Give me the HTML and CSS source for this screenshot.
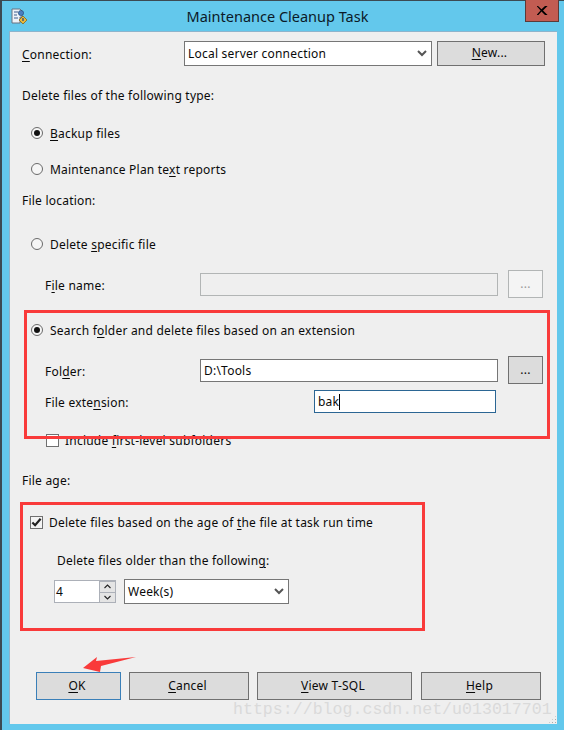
FILE: index.html
```html
<!DOCTYPE html>
<html lang="en">
<head>
<meta charset="utf-8">
<title>Maintenance Cleanup Task</title>
<link rel="stylesheet" href="styles.css">
</head>
<body>
<div class="window">
  <header class="titlebar">
    <svg class="app-icon" width="17" height="17" viewBox="0 0 17 17">
      <path d="M1 1h8l2 2v6H9v6H1z" fill="#eef2f7" stroke="#6b7280" stroke-width="1"/>
      <path d="M3 4h4M3 7h3M3 10h4" stroke="#3f5f8f" stroke-width="1"/>
      <circle cx="10" cy="5" r="2.6" fill="#4a7fc0" stroke="#1f3f70" stroke-width=".6"/>
      <path d="M12 8l4 4-4 4-4-4z" fill="#e8b93c" stroke="#7a5a10" stroke-width=".7"/>
      <path d="M12 10v3" stroke="#33507a" stroke-width="1.4"/>
    </svg>
    <h1 class="title">Maintenance Cleanup Task</h1>
    <div class="close"><svg width="11" height="9" viewBox="0 0 11 9"><path d="M1 0l3.500 3.300L8 0h2.600L6 4.400 10.600 9H8L4.500 5.500 1.400 9H-.4l4-4.600L-.4 0z" fill="#000"/></svg></div>
  </header>

  <main class="client">
    <div class="row row-connection">
      <span class="label"><u>C</u>onnection:</span>
      <div class="field combo"><span>Local server connection</span><svg class="chev" width="10" height="7" viewBox="0 0 10 7"><path d="M1 1l4 4 4-4" fill="none" stroke="#555" stroke-width="2"/></svg></div>
      <div class="btn btn-new"><span><u>N</u>ew...</span></div>
    </div>

    <div class="line line-type">Delete files of the following type:</div>
    <div class="choice line-backup"><span class="radio on"></span><span><u>B</u>ackup files</span></div>
    <div class="choice line-maint"><span class="radio"></span><span>Maintenance Plan te<u>x</u>t reports</span></div>
    <div class="line line-location">File location:</div>
    <div class="choice line-specific"><span class="radio"></span><span>Delete <u>s</u>pecific file</span></div>

    <div class="row file-row line-name">
      <span class="label">F<u>i</u>le name:</span>
      <div class="field disabled"></div>
      <div class="btn btn-dots disabled"><span>...</span></div>
    </div>

    <div class="choice line-search"><span class="radio on"></span><span>Search f<u>o</u>lder and delete files based on an extension</span></div>

    <div class="row file-row line-folder">
      <span class="label">Fol<u>d</u>er:</span>
      <div class="field"><span>D:\Tools</span></div>
      <div class="btn btn-dots"><span>...</span></div>
    </div>

    <div class="row ext-row">
      <span class="label">File exte<u>n</u>sion:</span>
      <div class="field focus"><span class="caret">bak</span></div>
    </div>

    <div class="check-line line-include"><span class="check"></span><span>Include <u>f</u>irst-level subfolders</span></div>
    <div class="line line-age">File age:</div>
    <div class="check-line line-based"><span class="check on"><svg width="12" height="11" viewBox="0 0 12 11"><path d="M1.500 5.500l3 3 6-7" fill="none" stroke="#222" stroke-width="2.400"/></svg></span><span>Delete files based on the age of <u>t</u>he file at task run time</span></div>
    <div class="line line-older">Delete files older than the followin<u>g</u>:</div>

    <div class="row age-row">
      <div class="spin">
        <span class="spin-val">4</span>
        <div class="spin-btns">
          <div class="spin-btn"><svg width="7" height="5" viewBox="0 0 7 5"><path d="M.5 4l3-3 3 3" fill="none" stroke="#222" stroke-width="1.100"/></svg></div>
          <div class="spin-btn"><svg width="7" height="5" viewBox="0 0 7 5"><path d="M.5 1l3 3 3-3" fill="none" stroke="#222" stroke-width="1.100"/></svg></div>
        </div>
      </div>
      <div class="field combo combo-age"><span>Week(s)</span><svg class="chev" width="10" height="7" viewBox="0 0 10 7"><path d="M1 1l4 4 4-4" fill="none" stroke="#555" stroke-width="2"/></svg></div>
    </div>

    <div class="row actions">
      <div class="btn btn-ok"><span><u>O</u>K</span></div>
      <div class="btn btn-cancel"><span><u>C</u>ancel</span></div>
      <div class="btn btn-view"><span><u>V</u>iew T-SQL</span></div>
      <div class="btn btn-help"><span><u>H</u>elp</span></div>
    </div>
  </main>

  <div class="mark mark-search"></div>
  <div class="mark mark-age"></div>
  <svg class="arrow" width="56" height="19" viewBox="0 0 56 19"><path d="M1 12L15 1l-1 4L54 1 19 10l-1 6z" fill="#f93a3a"/></svg>
  <div class="watermark">https://blog.csdn.net/u013017701</div>
  <div class="grip"></div>
</div>
</body>
</html>
```

FILE: styles.css
```css
* { box-sizing: border-box; }

html, body {
  margin: 0;
  padding: 0;
}

body {
  width: 564px;
  height: 730px;
  overflow: hidden;
  font-family: "Noto Sans", "Open Sans", sans-serif;
  font-size: 12px;
  letter-spacing: 0.22px;
  color: #0a0a0a;
}

u {
  text-underline-offset: 2px;
  text-decoration-thickness: 1px;
}

.window {
  position: relative;
  width: 564px;
  height: 730px;
  display: flex;
  flex-direction: column;
  background: #63c8ec;
  border-top: 1px solid #3c4a52;
  border-left: 2px solid #3c4a52;
  padding-left: 7px;
  padding-right: 7px;
}

.titlebar {
  flex: none;
  height: 30px;
  display: flex;
  align-items: center;
  position: relative;
}

.app-icon {
  position: absolute;
  left: 2px;
  top: 7px;
}

.title {
  margin: 0;
  width: 100%;
  padding-right: 11px;
  text-align: center;
  font-size: 14.500px;
  font-weight: 400;
  letter-spacing: 0;
  color: #0b1a28;
}

.close {
  position: absolute;
  right: -2px;
  top: -1px;
  width: 34px;
  height: 22px;
  display: flex;
  align-items: center;
  justify-content: center;
  background: #c25c52;
  border: 1px solid #5b3a38;
  border-top: 0;
}

.client {
  flex: none;
  height: 693px;
  background: #efefef;
  border-top: 1px solid #8db4cc;
  border-left: 1px solid #8db4cc;
  display: flex;
  flex-direction: column;
  padding-top: 9px;
}

.row {
  flex: none;
  display: flex;
  align-items: center;
}

.label {
  display: block;
  padding-top: 2px;
}

.line, .choice, .check-line {
  flex: none;
  height: 16px;
  line-height: 16px;
  white-space: pre;
}

.choice, .check-line {
  display: flex;
  align-items: center;
}

.choice > span:last-child, .check-line > span:last-child {
  padding-top: 2px;
}

.line {
  display: block;
  padding-top: 1px;
  padding-left: 12px;
}

.choice { padding-left: 21px; gap: 7px; }
.check-line { gap: 6px; }

/* vertical rhythm of the form */
.row-connection { height: 25px; padding-left: 12px; }
.line-type { margin-top: 21px; }
.line-backup { margin-top: 22px; }
.line-maint { margin-top: 20px; }
.line-location { margin-top: 15px; }
.line-specific { margin-top: 28px; }
.line-name { margin-top: 18px; }
.line-search { margin-top: 24px; }
.line-folder { margin-top: 18px; }
.ext-row { margin-top: 6px; height: 23px; padding-left: 35px; }
.line-include { margin-top: 19px; padding-left: 36px; }
.line-age { margin-top: 24px; }
.line-based { margin-top: 26px; padding-left: 20px; }
.line-older { margin-top: 22px; padding-left: 47px; }
.age-row { margin-top: 11px; height: 25px; padding-left: 44px; }
.actions { margin-top: 68px; height: 28px; padding-left: 26px; }

/* controls */
.field {
  height: 23px;
  background: #fff;
  border: 1px solid #767676;
  display: flex;
  align-items: center;
  padding-left: 3px;
}

.field.disabled {
  background: #efefef;
  border-color: #b2b5b5;
}

.field.focus {
  width: 182px;
  border-color: #2b6694;
}

.combo {
  height: 25px;
  justify-content: space-between;
  padding-right: 4px;
}

.row-connection .label { width: 162px; }
.row-connection .combo { width: 248px; }

.combo-age {
  width: 165px;
  margin-left: 8px;
}

.btn {
  height: 100%;
  background: #dcdcdc;
  border: 1px solid #707070;
  display: flex;
  align-items: center;
  justify-content: center;
  padding-bottom: 2px;
  padding-right: 3px;
}

.btn.disabled {
  background: #f4f4f4;
  border-color: #b2b5b5;
  color: #9a9a9a;
}

.btn-new { width: 108px; margin-left: 5px; }

.file-row {
  height: 28px;
  padding-left: 35px;
}

.file-row .label { width: 155px; }
.file-row .field { width: 298px; }
.btn-dots { width: 35px; margin-left: 10px; padding-right: 0; }

.ext-row .label { width: 269px; }

.caret {
  border-right: 1px solid #000;
  line-height: 16px;
}

.radio {
  flex: none;
  width: 12px;
  height: 12px;
  border: 1px solid #6a6a6a;
  border-radius: 50%;
  background: #f6f6f6;
  display: flex;
  align-items: center;
  justify-content: center;
}

.radio.on::after {
  content: "";
  width: 6px;
  height: 6px;
  border-radius: 50%;
  background: #111;
}

.check {
  flex: none;
  width: 13px;
  height: 13px;
  background: #fff;
  border: 1px solid #707070;
  display: flex;
  align-items: center;
  justify-content: center;
}

.check.on {
  background: #f4f4f4;
}

.spin {
  width: 62px;
  height: 23px;
  background: #fff;
  border: 1px solid #acb0b8;
  display: flex;
  justify-content: space-between;
  align-items: center;
  padding-left: 1px;
}

.spin-btns {
  width: 16px;
  height: 100%;
  display: flex;
  flex-direction: column;
  gap: 1px;
  background: #acb0b8;
  padding: 1px 0 0 1px;
}

.spin-btn {
  flex: 1;
  background: #e4e4e4;
  display: flex;
  align-items: center;
  justify-content: center;
}

.btn-ok { width: 85px; border-color: #3a7fb8; }
.btn-cancel { width: 120px; margin-left: 8px; }
.btn-view { width: 155px; margin-left: 8px; }
.btn-help { width: 120px; margin-left: 9px; }

/* annotations drawn over the dialog */
.mark {
  position: absolute;
  border: 3px solid #f93a3a;
  pointer-events: none;
}

.mark-search {
  left: 22px;
  top: 309px;
  width: 526px;
  height: 129px;
}

.mark-age {
  left: 18px;
  top: 501px;
  width: 405px;
  height: 129px;
}

.arrow {
  position: absolute;
  left: 80px;
  top: 655px;
}

.watermark {
  position: absolute;
  left: 231px;
  top: 699px;
  font-family: "Liberation Mono", monospace;
  font-size: 16.600px;
  letter-spacing: 0;
  line-height: 20px;
  color: #dadada;
  white-space: pre;
}

.grip {
  position: absolute;
  left: 546px;
  top: 714px;
  width: 9px;
  height: 9px;
  background-image: radial-gradient(circle, #aaa 0.8px, transparent 1px);
  background-size: 3px 3px;
  clip-path: polygon(100% 0, 100% 100%, 0 100%);
}
```
